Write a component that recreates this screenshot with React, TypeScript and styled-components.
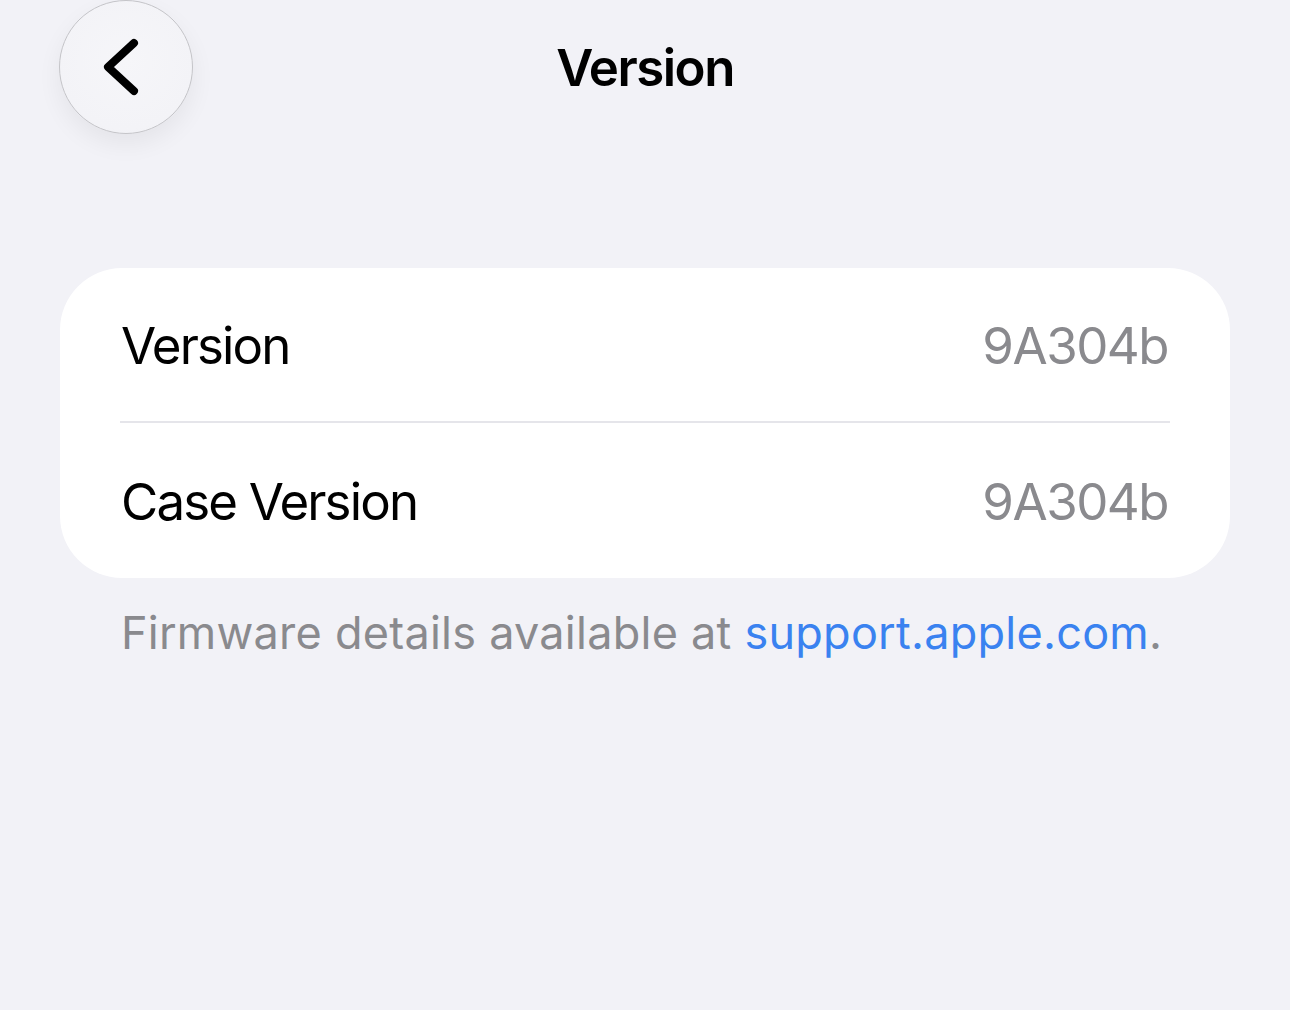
import React from "react";
import styled, { createGlobalStyle } from "styled-components";

const Global = createGlobalStyle`
  html, body { margin: 0; padding: 0; background: #f2f2f7; }
  body { font-family: Inter, "Noto Sans", sans-serif; -webkit-font-smoothing: antialiased; }
`;

const Page = styled.div`
  width: 1290px;
  height: 1010px;
  background: #f2f2f7;
  box-sizing: border-box;
  padding: 0 60px 0 60px;
  display: flex;
  flex-direction: column;
`;

const Header = styled.div`
  position: relative;
  height: 134px;
  display: flex;
  align-items: center;
  justify-content: center;
`;

const BackButton = styled.button`
  position: absolute;
  left: -1px;
  top: 0;
  width: 134px;
  height: 134px;
  border-radius: 50%;
  border: 1.5px solid #c4c4c8;
  background: radial-gradient(circle at 50% 45%, #f6f6f9 0%, #f3f3f7 70%, #ededf1 100%);
  box-shadow: 0 10px 24px rgba(0, 0, 0, 0.06);
  display: flex;
  align-items: center;
  justify-content: center;
  padding: 0;
  box-sizing: border-box;
`;

const Title = styled.h1`
  margin: 0;
  font-size: 51px;
  font-weight: 600;
  letter-spacing: -1.5px;
  color: #000;
  line-height: 1;
`;

const Card = styled.div`
  margin-top: 134px;
  background: #fff;
  border-radius: 62px;
  padding: 0 60px;
  display: flex;
  flex-direction: column;
`;

const Row = styled.div<{ $divider?: boolean }>`
  height: 155px;
  padding-top: 2px;
  display: flex;
  align-items: center;
  justify-content: space-between;
  border-bottom: ${(p) => (p.$divider ? "2px solid #e5e5ea" : "none")};
  box-sizing: border-box;
`;

const Label = styled.span`
  font-size: 51px;
  color: #000;
  letter-spacing: -1.85px;
  line-height: 1;
  margin-left: 1px;
`;

const Value = styled.span`
  font-size: 51px;
  color: #8a8a8e;
  letter-spacing: -1.5px;
  line-height: 1;
  margin-right: 2px;
`;

const Footer = styled.p`
  margin: 28px 0 0 61px;
  font-size: 45px;
  line-height: 1.2;
  color: #8a8a8e;
  letter-spacing: 0.25px;
`;

const Link = styled.a`
  color: #3a82f0;
  text-decoration: none;
`;

export default function App() {
  return (
    <>
      <Global />
      <Page>
        <Header>
          <BackButton aria-label="Back">
            <svg width="60" height="70" viewBox="0 0 60 70">
              <path
                d="M38 11 L12 35 L38 59"
                fill="none"
                stroke="#000"
                strokeWidth="8"
                strokeLinecap="round"
                strokeLinejoin="round"
              />
            </svg>
          </BackButton>
          <Title>Version</Title>
        </Header>
        <Card>
          <Row $divider>
            <Label>Version</Label>
            <Value>9A304b</Value>
          </Row>
          <Row>
            <Label>Case Version</Label>
            <Value>9A304b</Value>
          </Row>
        </Card>
        <Footer>
          Firmware details available at <Link href="#">support.apple.com</Link>.
        </Footer>
      </Page>
    </>
  );
}
